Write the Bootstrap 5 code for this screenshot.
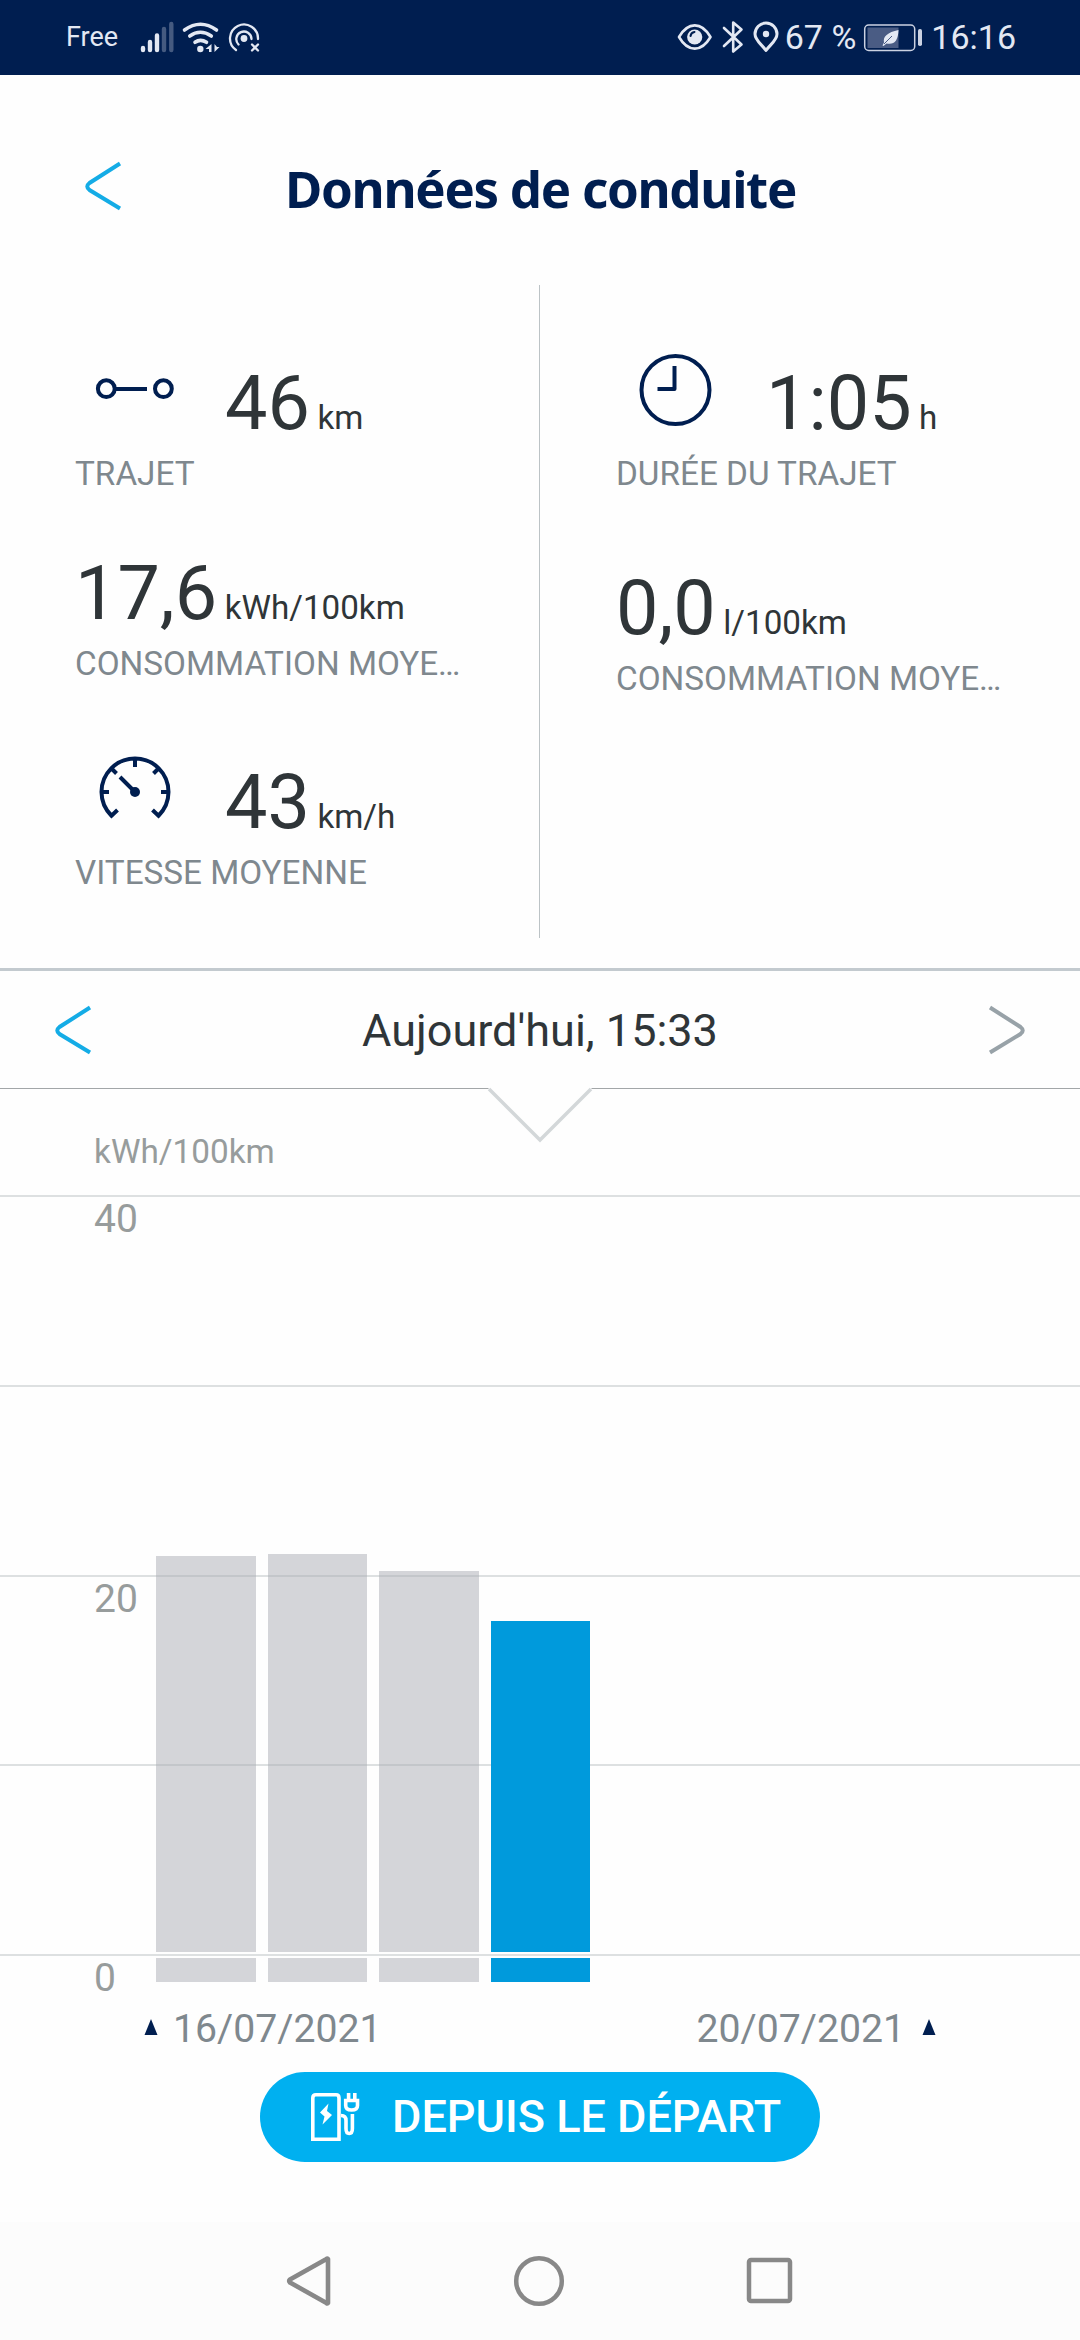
<!DOCTYPE html>
<html lang="fr">
<head>
<meta charset="utf-8">
<meta name="viewport" content="width=device-width, initial-scale=1">
<title>Données de conduite</title>
<link href="https://cdn.jsdelivr.net/npm/bootstrap@5.3.0/dist/css/bootstrap.min.css" rel="stylesheet">
<style>
:root{--navy:#001e50;--sky:#00b0f0;--ink:#2f3538;--slate:#7f888e;--axis:#979c9c}
body{font-family:Roboto,sans-serif;background:#fefefe;color:var(--ink);width:1080px;height:2340px;overflow:hidden}
svg{display:block;flex:none;overflow:visible}
.statusbar{height:75px;background:var(--navy);color:#e3e8f3;padding:0 64px 0 66px;font-size:34px;line-height:77px}
.carrier{font-size:27px}
.signals{margin-left:20px}
.battery{margin:0 8px 0 7px}
.app-head{height:210px;padding-left:84px}
.app-title{font:700 51px/70px "Noto Sans",sans-serif;letter-spacing:-1.3px;color:var(--navy);margin:15px 0 0 163px;white-space:nowrap}
.back{margin-top:12px}
.stats{height:653px}
.stat-col{width:540px;padding:73px 0 0 75px}
.stat-col.first{border-right:1px solid #bcc3c6}
.stat-col+.stat-col{padding-left:76px}
.stat-val{height:90px;line-height:90px;font-size:75.5px;white-space:nowrap}
.stat-val small{font-size:33.2px;margin-left:7.5px}
.stat-name{font-size:33.3px;line-height:40px;margin-top:6px;color:var(--slate);white-space:nowrap}
.g54{margin-bottom:54px}.g73{margin-bottom:73px}.g69{margin-bottom:69px}
.datebar{margin-top:30px;height:121px;border-top:3px solid #c3cacf;border-bottom:1px solid #a2a6a8;padding:0 54px;font-size:45px;position:relative}
.datebar span{padding-top:3px}
.notch{position:absolute;left:486px;top:117px}
.plot{height:893px;position:relative}
.unit{height:106px;padding:41px 0 0 94px;font-size:33.3px;line-height:44px;color:var(--axis)}
.band{height:189.75px;border-top:2px solid #dde0e1;padding:0 0 0 94px;font-size:39px;line-height:44px;color:var(--axis)}
.band.zero{height:28px}
.bars{position:absolute;left:156px;top:0;height:893px;gap:12px}
.bar-col{width:99.5px}
.bar-main,.bar-foot{background:rgba(170,172,180,.5)}
.bar-foot{height:24px;margin-top:6px}
.current .bar-main,.current .bar-foot{background:#009adc}
.dates{height:60px;padding:0 144px;font-size:39.2px;line-height:60px;color:var(--slate);margin-top:17px}
.dates svg{margin-bottom:5px}
.since{width:560px;height:90px;margin:13px auto 0;background:var(--sky);color:#fff;font-size:45px;font-weight:500;padding:0 0 0 50px;border:0;line-height:92px}
.softkeys{height:118px;margin-top:60px;background:#fcfcfc;padding:0 286px}
</style>
<script src="https://cdn.jsdelivr.net/npm/bootstrap@5.3.0/dist/js/bootstrap.bundle.min.js"></script>
</head>
<body>
<div class="statusbar d-flex align-items-center">
  <span class="carrier">Free</span>
  <svg class="signals" width="124" height="75" viewBox="138 0 124 75" fill="none" stroke="#e3e8f3" stroke-linecap="round">
    <g stroke-width="4.4"><path d="M143 48v2M150 42v8M157 35.500v14.500"/><path d="M164 29v21M171.300 24v26" opacity=".3"/></g>
    <path d="M184.500 30q16-11.500 32 0M189.800 36q10.500-7.500 21.500 0M195 42.300q5.500-4 11.500 0" stroke-width="3.600"/>
    <circle cx="200.300" cy="49" r="3.200" fill="#e3e8f3" stroke="none"/>
    <path d="M211.500 44v8h-2.500v-3h-3.500zM214.500 44v8l5-5h-2.500z" fill="#e3e8f3" stroke="none"/>
    <path d="M236 50a14 14 0 1 1 22-11M238.500 44.500a7.600 7.600 0 1 1 13-5.500" stroke-width="2.300"/>
    <circle cx="244" cy="38.500" r="3.400" fill="#e3e8f3" stroke="none"/>
    <path d="M252 44.500l6 6m0-6l-6 6" stroke-width="2.300"/>
  </svg>
  <svg class="ms-auto" width="108" height="75" viewBox="677 0 108 75" fill="none" stroke="#e3e8f3" stroke-width="2.600" stroke-linejoin="round" stroke-linecap="round">
    <path d="M679 37c9-15.500 22.500-15.500 31.500 0c-9 15.500-22.500 15.500-31.500 0z"/><circle cx="694.700" cy="37" r="7.600" fill="#e3e8f3" stroke="none"/><path d="M690.500 36q.5-3.500 4-4" stroke="#001e50" stroke-width="2"/>
    <path d="M724 28l17.500 16.500l-8.300 7V22.500l8.300 7L724 46"/>
    <path d="M766 50.500c-4-6-11-10-11-16.500a11 11 0 0 1 22 0c0 6.500-7 10.500-11 16.500z" stroke-width="3"/><circle cx="766" cy="34" r="3.200" fill="#e3e8f3" stroke="none"/>
  </svg>
  <span>67 %</span>
  <svg class="battery" width="60" height="75" viewBox="863 0 60 75">
    <rect x="864.700" y="25" width="50" height="25.500" rx="4" fill="none" stroke="#cbd2e2" stroke-width="1.500"/><rect x="867.500" y="27.500" width="31" height="20.500" fill="#4a5c84"/>
    <path d="M882.500 45.500l1.500-3q-2-9 14.500-12.500q-.5 16-12 13.500l-3 2.500z" fill="#e3e8f3"/><path d="M884 44l8-8" stroke="#4a5c84"/><rect x="918" y="29" width="4" height="17" rx="1.800" fill="#cbd2e2"/>
  </svg>
  <span>16:16</span>
</div>

<header class="app-head d-flex align-items-center">
  <svg class="back" width="38" height="50" viewBox="0 0 38 50" fill="none" stroke="#14ace6" stroke-width="4"><path d="M36 2.500L5.500 22q-4.500 3.500 0 7L36 47.500"/></svg>
  <h1 class="app-title">Données de conduite</h1>
</header>

<section class="stats d-flex">
  <div class="stat-col first">
    <div class="g54">
      <div class="stat-val d-flex"><svg width="150" height="90" fill="none" stroke="#001e50" stroke-width="4"><circle cx="31.300" cy="30.700" r="8.400"/><circle cx="88.400" cy="30.700" r="8.400"/><path d="M40 31h32"/></svg><div>46<small>km</small></div></div>
      <div class="stat-name">TRAJET</div>
    </div>
    <div class="g73">
      <div class="stat-val">17,6<small>kWh/100km</small></div>
      <div class="stat-name">CONSOMMATION MOYE…</div>
    </div>
    <div>
      <div class="stat-val d-flex"><svg width="150" height="90" fill="none" stroke="#001e50" stroke-width="4"><path d="M42.500 53l-6 5.800A33.500 33.500 0 1 1 83.500 58.800L77.500 53M60 1v9M26.500 35h7.500M86 35h7.500M36.500 11.500l5 5M83.500 11.500l-5 5M45 20l15 15"/><circle cx="60" cy="35" r="5" fill="#001e50" stroke="none"/></svg><div>43<small>km/h</small></div></div>
      <div class="stat-name">VITESSE MOYENNE</div>
    </div>
  </div>
  <div class="stat-col">
    <div class="g69">
      <div class="stat-val d-flex"><svg width="150" height="90" fill="none" stroke="#001e50" stroke-width="4"><circle cx="59.500" cy="32" r="34"/><path d="M58.500 8v23H41.500" stroke-linejoin="round"/></svg><div>1:05<small>h</small></div></div>
      <div class="stat-name">DURÉE DU TRAJET</div>
    </div>
    <div>
      <div class="stat-val">0,0<small>l/100km</small></div>
      <div class="stat-name">CONSOMMATION MOYE…</div>
    </div>
  </div>
</section>

<div class="datebar d-flex align-items-center justify-content-between">
  <svg width="38" height="50" viewBox="0 0 38 50" fill="none" stroke="#14ace6" stroke-width="4"><path d="M36 2.500L5.500 22q-4.500 3.500 0 7L36 47.500"/></svg>
  <span>Aujourd'hui, 15:33</span>
  <svg width="38" height="50" viewBox="0 0 38 50" fill="none" stroke="#98a2a8" stroke-width="4"><path d="M2 2.500L32.500 22q4.500 3.500 0 7L2 47.500"/></svg>
  <svg class="notch" width="108" height="56"><path d="M2 0L54 52L106 0z" fill="#fefefe"/><path d="M3 1L54 52L105 1" fill="none" stroke="#d3d7d9" stroke-width="3.500"/></svg>
</div>

<section class="plot">
  <div class="unit">kWh/100km</div>
  <div class="band">40</div>
  <div class="band"></div>
  <div class="band">20</div>
  <div class="band"></div>
  <div class="band zero">0</div>
  <div class="bars d-flex align-items-end">
    <div class="bar-col"><div class="bar-main" style="height:396px"></div><div class="bar-foot"></div></div>
    <div class="bar-col"><div class="bar-main" style="height:398px"></div><div class="bar-foot"></div></div>
    <div class="bar-col"><div class="bar-main" style="height:381px"></div><div class="bar-foot"></div></div>
    <div class="bar-col current"><div class="bar-main" style="height:331px"></div><div class="bar-foot"></div></div>
  </div>
</section>

<div class="dates d-flex align-items-center">
  <svg width="14" height="16"><path d="M7 0l6.500 16H.5z" fill="#001e50"/></svg><span style="margin-left:15px">16/07/2021</span>
  <span class="ms-auto" style="margin-right:17px">20/07/2021</span><svg width="14" height="16"><path d="M7 0l6.500 16H.5z" fill="#001e50"/></svg>
</div>

<button class="since btn rounded-pill d-flex align-items-center">
  <svg width="50" height="50" viewBox="310 2092 50 50" fill="none" stroke="#fff" stroke-width="3.600"><path d="M312.800 2139.200V2098q0-3.200 3.200-3.200h20q3 0 3 3.200v41.200zM341 2115.500q5 0 5 5v8q0 5 3.200 5t3.200-5V2114"/><path d="M345.700 2100.500h11.800v5q0 4.500-5.900 4.500t-5.900-4.500zM348.600 2093v7M354.800 2093v7"/><path d="M328.500 2103.500l-8.500 9l4.500 4l-2 8l9.500-9.500l-5-4z" fill="#fff" stroke="none"/></svg>
  <span style="margin-left:32px">DEPUIS LE DÉPART</span>
</button>

<nav class="softkeys d-flex align-items-center justify-content-between">
  <svg width="45" height="52" fill="none" stroke="#888" stroke-width="4.600" stroke-linejoin="round"><path d="M42 4v44q-.5 1-1.500 0L4 27.500q-1.500-1.500 0-3L40.500 4q1-1 1.500 0z"/></svg>
  <svg width="52" height="52" fill="none" stroke="#888" stroke-width="4.500"><circle cx="26" cy="26" r="22.800"/></svg>
  <svg width="48" height="48" fill="none" stroke="#888" stroke-width="4.500"><rect x="3" y="3" width="41" height="41" rx="2"/></svg>
</nav>
</body>
</html>
